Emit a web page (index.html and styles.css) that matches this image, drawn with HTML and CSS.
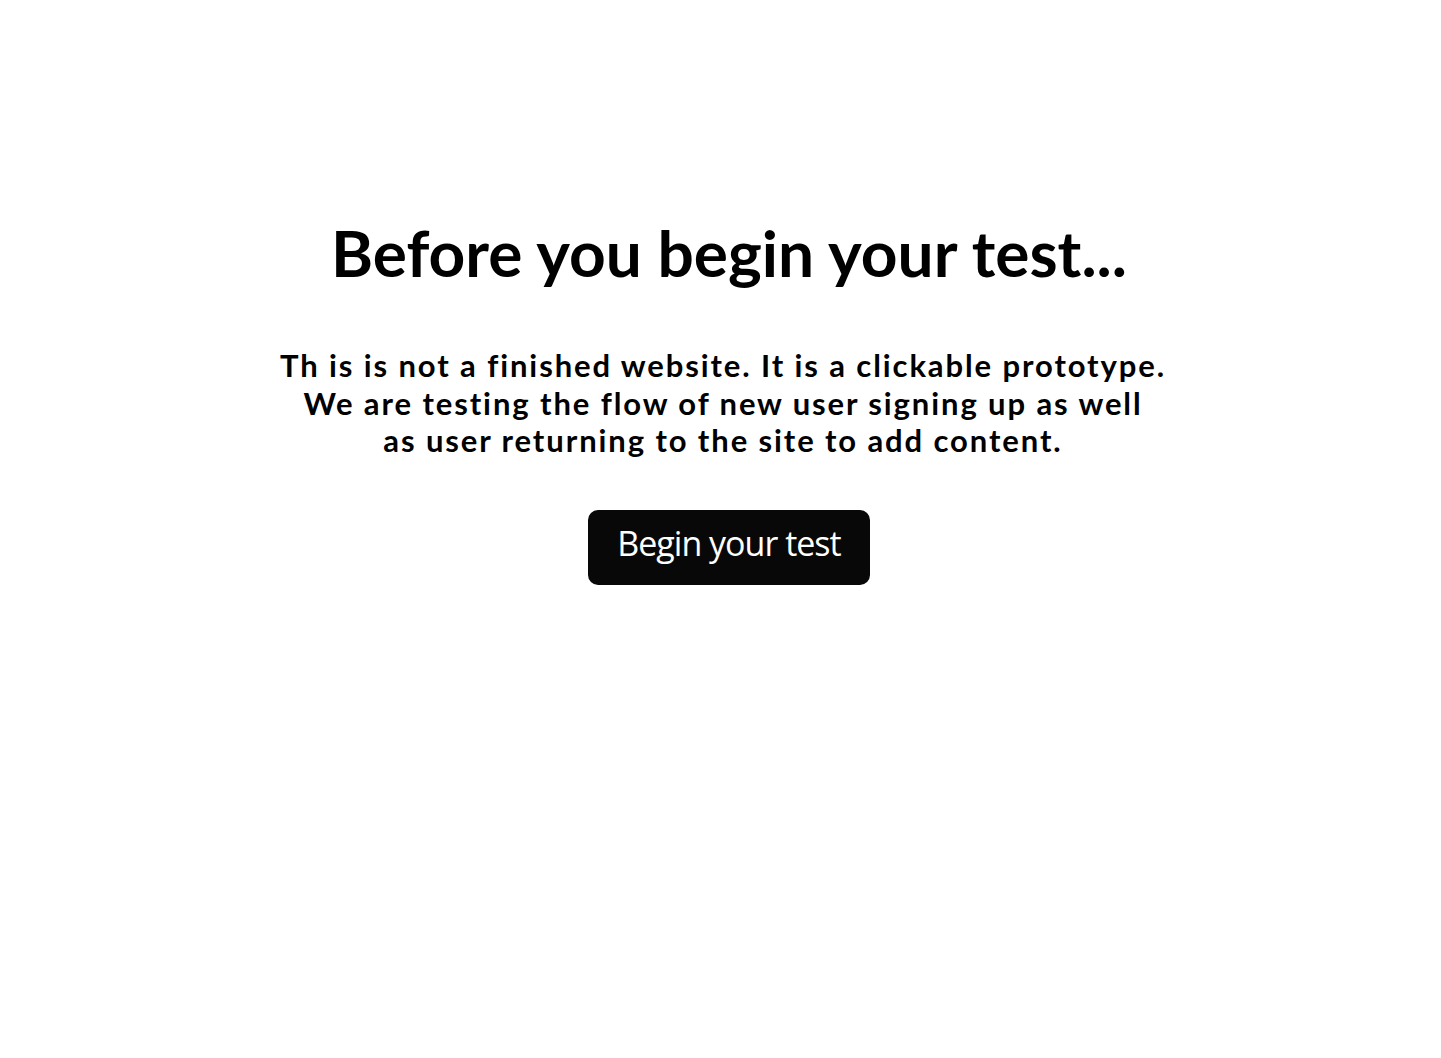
FILE: index.html
```html
<!DOCTYPE html>
<html lang="en">
<head>
<meta charset="utf-8">
<title>Before you begin your test</title>
<link rel="stylesheet" href="styles.css">
</head>
<body>
<main class="intro">
  <h1 class="intro__title">Before you begin your test...</h1>
  <p class="intro__text">Th is is not a finished website. It is a clickable prototype.<br>We are testing the flow of new user signing up as well<br>as user returning to the site to add content.</p>
  <a class="intro__button" href="#">Begin your test</a>
</main>
</body>
</html>
```

FILE: styles.css
```css
html, body {
  margin: 0;
  padding: 0;
  background: #ffffff;
}

.intro {
  display: flex;
  flex-direction: column;
  align-items: center;
  padding-top: 215px;
  padding-left: 17px;
  color: #000;
  font-family: "Lato", "Noto Sans", sans-serif;
  font-variant-ligatures: none;
}

.intro__title {
  margin: 0;
  font-size: 64px;
  font-weight: 700;
  line-height: 76px;
  text-align: center;
}

.intro__text {
  margin: 56px 12px 0 0;
  font-size: 31px;
  font-weight: 700;
  line-height: 37.5px;
  letter-spacing: 1.9px;
  text-align: center;
}

.intro__button {
  margin-top: 50px;
  width: 282px;
  height: 75px;
  box-sizing: border-box;
  display: flex;
  align-items: center;
  justify-content: center;
  padding-bottom: 8px;
  background: #080808;
  border-radius: 10px;
  color: #fff;
  text-decoration: none;
  font-family: "Open Sans", sans-serif;
  font-size: 34px;
  letter-spacing: -1px;
}
```
